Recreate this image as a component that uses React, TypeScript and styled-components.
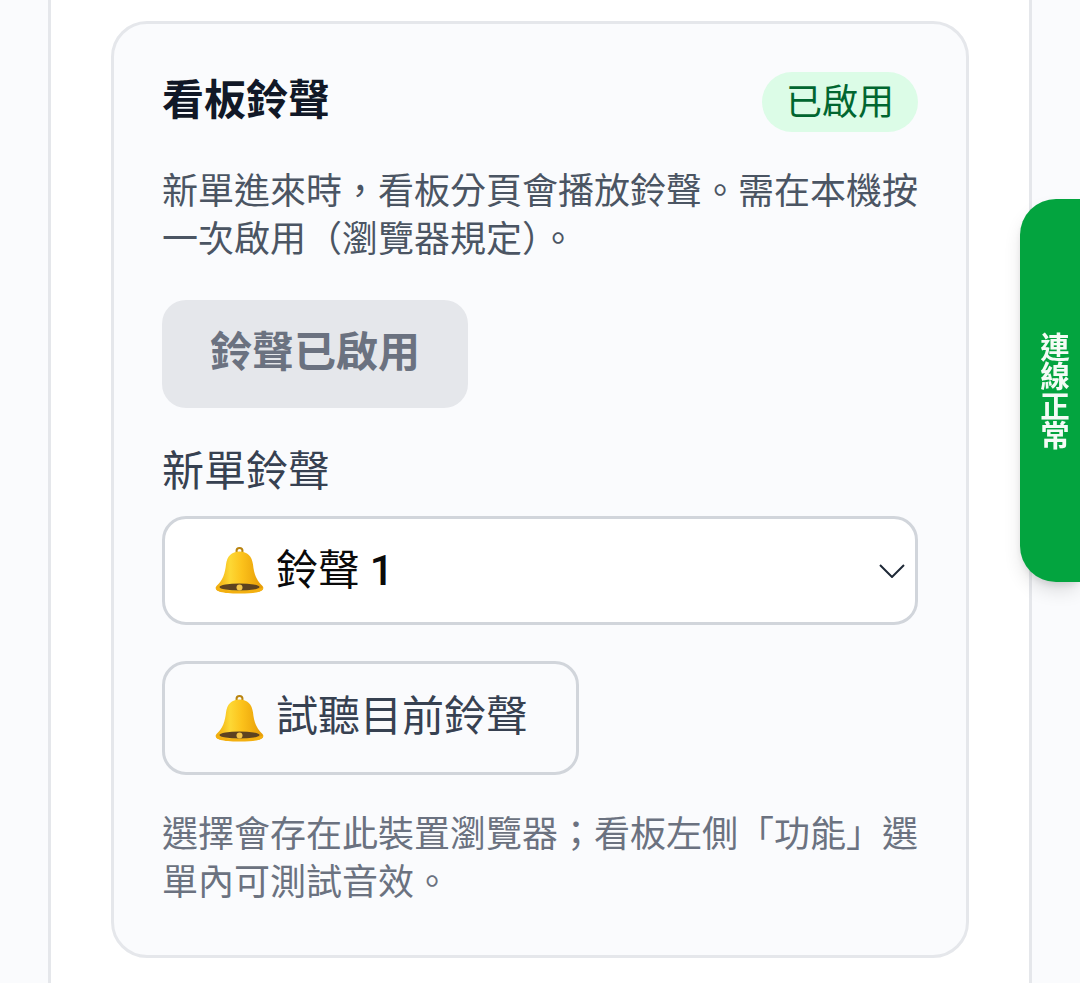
import React from "react";
import styled, { createGlobalStyle } from "styled-components";

const Global = createGlobalStyle`
  html, body { margin: 0; padding: 0; height: 983px; overflow: hidden; background: #fafbfd; }
  body { font-family: Inter, "Noto Sans CJK TC", "Noto Sans", sans-serif; }
  * { box-sizing: border-box; }
`;

const Page = styled.div`
  width: 1080px;
  height: 983px;
  overflow: hidden;
  padding: 0 48px;
`;

const Panel = styled.main`
  background: #fff;
  border-left: 3px solid #e5e7eb;
  border-right: 3px solid #e5e7eb;
  padding: 21px 60px;
  height: 983px;
`;

const Card = styled.section`
  background: #fafbfd;
  border: 3px solid #e5e7eb;
  border-radius: 36px;
  padding: 48px;
  height: 937px;
`;

const Header = styled.header`
  display: flex;
  justify-content: space-between;
  align-items: center;
  height: 60px;
`;

const Title = styled.h2`
  margin: 0 0 4px;
  font-size: 42px;
  line-height: 56px;
  font-weight: 700;
  color: #111827;
`;

const Badge = styled.span`
  height: 60px;
  padding: 0 24px;
  border-radius: 30px;
  background: #dcfce7;
  color: #016630;
  font-size: 36px;
  line-height: 60px;
`;

const Description = styled.p<{ $top: number }>`
  margin: ${(p) => p.$top}px 0 0;
  font-size: 36px;
  line-height: 48px;
  color: #4b5563;
`;

const Note = styled(Description)`
  color: #6b7280;
`;

const EnableButton = styled.button`
  display: block;
  margin-top: 37px;
  height: 108px;
  padding: 0 48px 4px;
  border: 0;
  border-radius: 24px;
  background: #e5e7eb;
  color: #6b7280;
  font: 700 42px/60px Inter, "Noto Sans CJK TC", sans-serif;
`;

const FieldLabel = styled.label`
  display: block;
  margin-top: 36px;
  font-size: 42px;
  line-height: 54px;
  color: #374151;
`;

const SelectBox = styled.div`
  display: flex;
  align-items: center;
  gap: 12px;
  margin-top: 18px;
  height: 109px;
  padding: 0 10px 0 50px;
  background: #fff;
  border: 3px solid #d1d5db;
  border-radius: 24px;
  color: #0a0a0a;
  font-size: 42px;
`;

const SelectText = styled.span`
  flex: 1;
  padding-bottom: 9px;
`;

const SelectNumber = styled.span`
  margin-left: -2px;
  font-family: Roboto, sans-serif;
  font-weight: 500;
`;

const TestButton = styled.button`
  display: flex;
  align-items: center;
  gap: 12px;
  margin-top: 36px;
  height: 114px;
  padding: 0 48px 0 50px;
  background: transparent;
  border: 3px solid #d1d5db;
  border-radius: 24px;
  color: #374151;
  font: 400 42px/60px Inter, "Noto Sans CJK TC", sans-serif;
`;

const TestLabel = styled.span`
  padding-bottom: 4px;
`;

const StatusTab = styled.aside`
  position: fixed;
  right: 0;
  top: 199px;
  width: 60px;
  height: 383px;
  padding-left: 6px;
  display: flex;
  align-items: center;
  justify-content: center;
  background: #03a43f;
  border-radius: 36px 0 0 36px;
  box-shadow: 0 10px 20px -4px rgba(0, 0, 0, 0.16), 0 4px 8px -2px rgba(0, 0, 0, 0.1);
  color: #f4fbf6;
  font-size: 29.5px;
  font-weight: 700;
  line-height: 30px;
  writing-mode: vertical-rl;
`;

const BellSvg = styled.svg`
  flex: none;
  width: 49px;
  height: 47px;
`;

const Bell = ({ id }: { id: string }) => (
  <BellSvg viewBox="0 0 49 47" aria-hidden="true">
    <defs>
      <linearGradient id={id} x1="0" x2="1" y1="0" y2="0">
        <stop offset="0" stopColor="#eea80a" />
        <stop offset="0.3" stopColor="#fdd835" />
        <stop offset="0.55" stopColor="#fcc21b" />
        <stop offset="1" stopColor="#e59a06" />
      </linearGradient>
    </defs>
    <circle cx="24.5" cy="4" r="3" fill="none" stroke="#b98410" strokeWidth="2" />
    <path
      d="M24.500 4.500c-8 0-12.500 5-13.500 13-1 9-3 15.500-9.500 21.500-1.500 2-1 4.500 3 5.500h40c4-1 4.500-3.500 3-5.500-6.500-6-8.500-12.500-9.500-21.500-1-8-5.500-13-13.500-13z"
      fill={`url(#${id})`}
    />
    <path d="M1 40c5 5 42 5 47 0 1 3.500-3 6.500-23.500 6.500S0 43.500 1 40z" fill="#f3b011" />
    <ellipse cx="24.5" cy="40" rx="20" ry="3.600" fill="#5d4320" />
    <circle cx="24.500" cy="40.500" r="3" fill="#f4c74a" />
  </BellSvg>
);

const Chevron = () => (
  <svg width="26" height="14" viewBox="0 0 26 14" fill="none" aria-hidden="true">
    <path d="M1 1l12 12L25 1" stroke="#1f2937" strokeWidth="2" />
  </svg>
);

export default function App() {
  return (
    <>
      <Global />
      <Page>
        <Panel>
          <Card>
            <Header>
              <Title>看板鈴聲</Title>
              <Badge>已啟用</Badge>
            </Header>
            <Description $top={35}>
              新單進來時，看板分頁會播放鈴聲。需在本機按一次啟用（瀏覽器規定）。
            </Description>
            <EnableButton>鈴聲已啟用</EnableButton>
            <FieldLabel>新單鈴聲</FieldLabel>
            <SelectBox>
              <Bell id="bell-a" />
              <SelectText>
                鈴聲 <SelectNumber>1</SelectNumber>
              </SelectText>
              <Chevron />
            </SelectBox>
            <TestButton>
              <Bell id="bell-b" />
              <TestLabel>試聽目前鈴聲</TestLabel>
            </TestButton>
            <Note $top={35}>選擇會存在此裝置瀏覽器；看板左側「功能」選單內可測試音效。</Note>
          </Card>
        </Panel>
      </Page>
      <StatusTab>連線正常</StatusTab>
    </>
  );
}
